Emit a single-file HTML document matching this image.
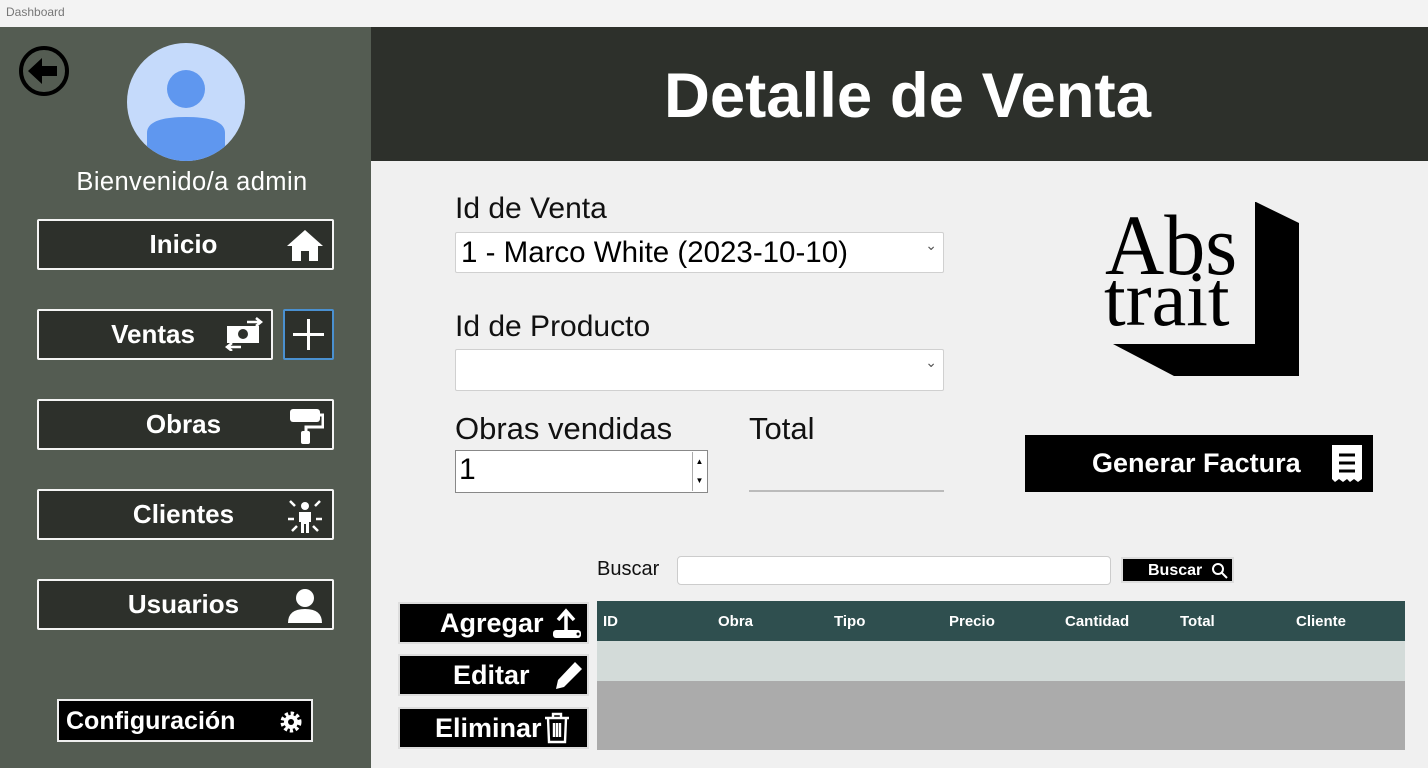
<!DOCTYPE html>
<html><head><meta charset="utf-8"><style>
*{box-sizing:border-box;margin:0;padding:0}
body{width:1428px;height:768px;position:relative;overflow:hidden;background:#f0f0f0;font-family:"Liberation Sans",sans-serif}
.a{position:absolute}
.nb{position:absolute;left:37px;width:297px;height:51px;background:#2d302b;border:2px solid #f4f4f4;border-radius:2px;color:#fff;font-weight:bold;font-size:26px;display:flex;align-items:center;justify-content:center}
.nb svg{position:absolute;right:8px;top:6px}
.lbl{position:absolute;font-size:30px;color:#111}
.sel{position:absolute;left:455px;width:489px;background:#fff;border:1px solid #d0d0d0;border-radius:2px;font-size:29.5px;padding-left:5px;display:flex;align-items:center}
.sel:after{content:"⌄";position:absolute;right:6px;top:4px;font-size:14px;color:#555}
.bb{position:absolute;left:398px;width:191px;height:42px;background:#000;border:2px solid #ddd;color:#fff;font-weight:bold;font-size:27px;display:flex;align-items:center}
.th{position:absolute;top:613px;color:#fff;font-size:15px;font-weight:bold}
</style></head><body>
<div class="a" style="left:0;top:0;width:1428px;height:27px;background:#f3f3f3;font-size:12px;color:#777;padding:5px 6px">Dashboard</div>
<div class="a" style="left:0;top:27px;width:371px;height:741px;background:#545c52"></div>
<svg class="a" style="left:18px;top:45px" width="52" height="52" viewBox="0 0 52 52"><circle cx="26" cy="26" r="23" fill="none" stroke="#000" stroke-width="4"/><path d="M10 26 L24 13 L24 21 L39 21 L39 31 L24 31 L24 39Z" fill="#000"/></svg>
<svg class="a" style="left:127px;top:43px" width="118" height="118" viewBox="0 0 118 118"><defs><clipPath id="c"><circle cx="59" cy="59" r="59"/></clipPath></defs><circle cx="59" cy="59" r="59" fill="#c5dafb"/><g clip-path="url(#c)" fill="#5f97ef"><circle cx="59" cy="46" r="19"/><path d="M20 118 L20 90 Q20 74 59 74 Q98 74 98 90 L98 118Z"/></g></svg>
<div class="a" style="left:0;width:384px;top:168px;text-align:center;color:#fff;font-size:25.5px;letter-spacing:0.4px">Bienvenido/a admin</div>
<div class="nb" style="top:219px;padding-right:4px">Inicio<svg width="38" height="36" viewBox="0 0 38 36"><path d="M19 3 L37 19 L32 19 L32 34 L23 34 L23 24 L15 24 L15 34 L6 34 L6 19 L1 19Z" fill="#fff"/></svg></div>
<div class="nb" style="top:309px;width:236px;padding-right:4px">Ventas<svg width="38" height="34" viewBox="0 0 38 34"><rect x="2" y="9" width="32" height="17" fill="#fff"/><circle cx="18" cy="17" r="5" fill="#2d302b"/><path d="M22 5 H35 M31 1 L36 5 L31 9 M16 30 H3 M7 26 L2 30 L7 34" stroke="#fff" stroke-width="2.5" fill="none"/></svg></div>
<div class="a" style="left:283px;top:309px;width:51px;height:51px;background:#2d302b;border:2px solid #4a90d0;border-radius:2px"><svg width="47" height="47"><path d="M23.5 8 V39 M8 23.5 H39" stroke="#fff" stroke-width="3"/></svg></div>
<div class="nb" style="top:399px;padding-right:4px">Obras<svg width="38" height="38" viewBox="0 0 38 38"><rect x="4" y="2" width="30" height="13" rx="3" fill="#fff"/><path d="M34 8 H37 V20 H20 V24" stroke="#fff" stroke-width="3" fill="none"/><rect x="15" y="24" width="9" height="13" rx="2" fill="#fff"/></svg></div>
<div class="nb" style="top:489px;padding-right:4px">Clientes<svg width="38" height="38" viewBox="0 0 38 38"><circle cx="19" cy="9" r="4" fill="#fff"/><path d="M13 15 H25 V25 H23 V36 H20 V27 H18 V36 H15 V25 H13Z" fill="#fff"/><path d="M4 4 L9 9 M34 4 L29 9 M2 22 H8 M36 22 H30 M6 34 L11 29 M32 34 L27 29" stroke="#fff" stroke-width="2.5"/></svg></div>
<div class="nb" style="top:579px;padding-right:4px">Usuarios<svg width="38" height="38" viewBox="0 0 38 38"><circle cx="19" cy="11" r="9" fill="#fff"/><path d="M2 36 Q2 22 19 22 Q36 22 36 36Z" fill="#fff"/></svg></div>
<div class="a" style="left:57px;top:699px;width:256px;height:43px;background:#000;border:2px solid #eee;color:#fff;font-weight:bold;font-size:25px;padding:6px 0 0 7px">Configuración<svg class="a" style="right:8px;top:9px" width="24" height="24" viewBox="0 0 24 24"><circle cx="12" cy="12" r="8" fill="none" stroke="#fff" stroke-width="5" stroke-dasharray="3 2.3"/><circle cx="12" cy="12" r="7" fill="#fff"/><circle cx="12" cy="12" r="3" fill="#000"/></svg></div>

<div class="a" style="left:386px;top:27px;width:1057px;height:134px;background:#2d302b;color:#fff;font-weight:bold;font-size:63.5px;text-align:center;padding-top:33px"></div>
<div class="a" style="left:371px;top:27px;width:1057px;height:134px;background:#2d302b;color:#fff;font-weight:bold;font-size:63.5px;text-align:center;padding:33px 0 0 16px">Detalle de Venta</div>

<div class="lbl" style="left:455px;top:192px">Id de Venta</div>
<div class="sel" style="top:232px;height:41px">1 - Marco White (2023-10-10)</div>
<div class="lbl" style="left:455px;top:310px">Id de Producto</div>
<div class="sel" style="top:349px;height:42px"></div>
<div class="lbl" style="left:455px;top:411px;font-size:31px">Obras vendidas</div>
<div class="lbl" style="left:749px;top:411px;font-size:31px">Total</div>
<div class="a" style="left:455px;top:450px;width:253px;height:43px;background:#fff;border:1px solid #888;font-size:30px;padding:2px 0 0 3px">1<div class="a" style="right:1px;top:1px;width:14px;height:39px;border-left:1px solid #aaa;font-size:8px;text-align:center;line-height:19px">▲<br>▼</div></div>
<div class="a" style="left:749px;top:490px;width:195px;height:2px;background:#bbb"></div>

<svg class="a" style="left:1100px;top:190px" width="205" height="190" viewBox="0 0 205 190"><path d="M156 12 L199 33 L199 186 L155 186 L155 12Z M13 154 L155 154 L155 186 L74 186Z" fill="#000"/><text x="5" y="80" font-family="Liberation Serif,serif" font-size="82" fill="#000" transform="scale(1,1.05)">Abs</text><text x="4" y="135" font-family="Liberation Serif,serif" font-size="78" fill="#000">trait</text></svg>
<div class="a" style="left:1025px;top:435px;width:348px;height:57px;background:#000;color:#fff;font-weight:bold;font-size:27px;padding:13px 0 0 67px">Generar Factura<svg class="a" style="left:306px;top:10px" width="32" height="38" viewBox="0 0 32 38"><path d="M1 0 H31 V34 L27 37 L23 34 L19 37 L16 34 L12 37 L8 34 L4 37 L1 34Z" fill="#fff"/><path d="M8 10 H24 M8 18 H24 M8 26 H24" stroke="#000" stroke-width="3"/></svg></div>

<div class="a" style="left:597px;top:558px;font-size:20px;color:#111">Buscar</div>
<div class="a" style="left:677px;top:556px;width:434px;height:29px;background:#fff;border:1px solid #ccc;border-radius:4px"></div>
<div class="a" style="left:1121px;top:557px;width:113px;height:26px;background:#000;border:2px solid #ddd;color:#fff;font-weight:bold;font-size:16px;padding:3px 0 0 25px">Buscar<svg class="a" style="left:88px;top:3px" width="17" height="17"><circle cx="7" cy="7" r="5" fill="none" stroke="#fff" stroke-width="2"/><path d="M11 11 L16 16" stroke="#fff" stroke-width="2"/></svg></div>

<div class="bb" style="top:602px;padding-left:40px">Agregar<svg style="margin-left:8px" width="32" height="32" viewBox="0 0 32 32"><path d="M14 26 V6 M6 13 L14 4 L22 13" stroke="#fff" stroke-width="3.5" fill="none"/><rect x="1" y="23" width="28" height="8" rx="3" fill="#fff"/><circle cx="26" cy="27" r="1.5" fill="#000"/></svg></div>
<div class="bb" style="top:654px;padding-left:53px">Editar<svg style="margin-left:24px" width="30" height="30" viewBox="0 0 30 30"><path d="M21 2 L28 9 L10 27 L2 29 L4 20Z" fill="#fff"/></svg></div>
<div class="bb" style="top:707px;padding-left:35px">Eliminar<svg style="margin-left:2px" width="26" height="32" viewBox="0 0 26 32"><path d="M1 6 H25 M9 6 V2 H17 V6 M4 6 L5 30 H21 L22 6 M10 11 V25 M13 11 V25 M16 11 V25" stroke="#fff" stroke-width="2.4" fill="none"/></svg></div>

<div class="a" style="left:597px;top:601px;width:808px;height:40px;background:#2f4f4f"></div>
<div class="a" style="left:597px;top:641px;width:808px;height:40px;background:#d3dbd9"></div>
<div class="a" style="left:597px;top:681px;width:808px;height:69px;background:#ababab"></div>
<div class="th" style="left:603px">ID</div><div class="th" style="left:718px">Obra</div><div class="th" style="left:834px">Tipo</div><div class="th" style="left:949px">Precio</div><div class="th" style="left:1065px">Cantidad</div><div class="th" style="left:1180px">Total</div><div class="th" style="left:1296px">Cliente</div>
</body></html>
